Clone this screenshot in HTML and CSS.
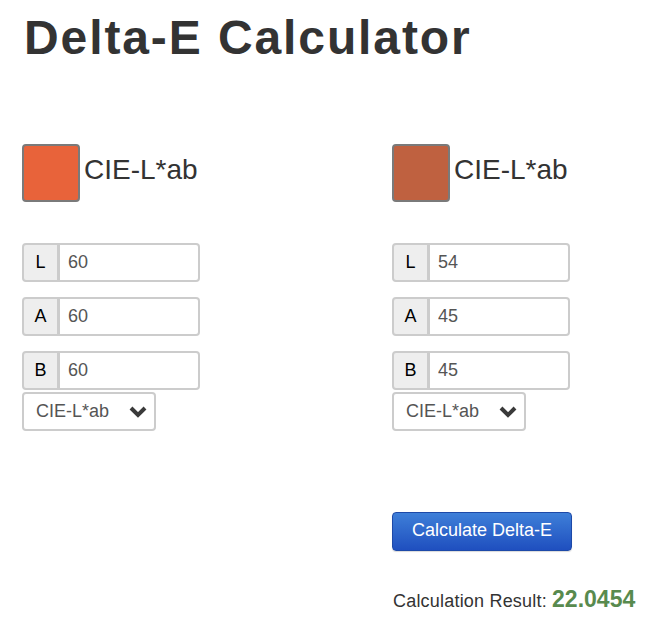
FILE: index.html
```html
<!DOCTYPE html>
<html>
<head>
<meta charset="utf-8">
<link rel="stylesheet" href="styles.css">
</head>
<body>
<h1 class="title">Delta-E Calculator</h1>
<div class="columns">
  <div class="col">
    <div class="color-head">
      <div class="swatch swatch-a"></div>
      <span class="space-label">CIE-L*ab</span>
    </div>
    <div class="fields">
      <div class="input-group"><span class="addon">L</span><input class="field" type="text" value="60"></div>
      <div class="input-group"><span class="addon">A</span><input class="field" type="text" value="60"></div>
      <div class="input-group"><span class="addon">B</span><input class="field" type="text" value="60"></div>
    </div>
    <div class="select">
      <span class="select-text">CIE-L*ab</span>
      <svg class="chevron" width="20" height="14" viewBox="0 0 20 14"><path d="M3 3 L10 10 L17 3" fill="none" stroke="#3a3a3a" stroke-width="4" stroke-linecap="butt" stroke-linejoin="miter"/></svg>
    </div>
  </div>
  <div class="col">
    <div class="color-head">
      <div class="swatch swatch-b"></div>
      <span class="space-label">CIE-L*ab</span>
    </div>
    <div class="fields">
      <div class="input-group"><span class="addon">L</span><input class="field" type="text" value="54"></div>
      <div class="input-group"><span class="addon">A</span><input class="field" type="text" value="45"></div>
      <div class="input-group"><span class="addon">B</span><input class="field" type="text" value="45"></div>
    </div>
    <div class="select">
      <span class="select-text">CIE-L*ab</span>
      <svg class="chevron" width="20" height="14" viewBox="0 0 20 14"><path d="M3 3 L10 10 L17 3" fill="none" stroke="#3a3a3a" stroke-width="4" stroke-linecap="butt" stroke-linejoin="miter"/></svg>
    </div>
  </div>
  <div class="actions">
    <button class="calc-btn" type="button">Calculate Delta-E</button>
    <p class="result">Calculation Result: <span class="result-value">22.0454</span></p>
  </div>
</div>
</body>
</html>
```

FILE: styles.css
```css
* { box-sizing: border-box; }

body {
  margin: 0;
  padding: 0 0 0 22px;
  font-family: "Liberation Sans", Arial, sans-serif;
  font-size: 18px;
  color: #333;
  background: #fff;
}

.title {
  margin: 14px 0 0 2px;
  font-size: 48px;
  line-height: 48px;
  font-weight: bold;
  letter-spacing: 1.9px;
  color: #333;
}

.columns {
  display: grid;
  grid-template-columns: 370px 1fr;
  margin-top: 82px;
}

.color-head {
  display: flex;
  align-items: center;
  gap: 4px;
}

.swatch {
  width: 58px;
  height: 58px;
  border: 2px solid #7a7a7a;
  border-radius: 4px;
}

.swatch-a { background: #e8633a; }
.swatch-b { background: #bf6140; }

.space-label {
  font-size: 28px;
  line-height: 1;
  margin-top: -7px;
  color: #333;
}

.fields {
  margin-top: 41px;
  display: flex;
  flex-direction: column;
  gap: 15px;
}

.input-group {
  display: flex;
  width: 178px;
  height: 39px;
}

.addon {
  width: 38px;
  display: flex;
  align-items: center;
  justify-content: center;
  background: #eee;
  border: 2px solid #ccc;
  border-right-width: 3px;
  border-radius: 4px 0 0 4px;
  color: #000;
  font-size: 18px;
}

.field {
  flex: 1;
  min-width: 0;
  border: 2px solid #ccc;
  border-left: none;
  border-radius: 0 4px 4px 0;
  padding: 0 0 0 8px;
  font-family: "Liberation Sans", Arial, sans-serif;
  font-size: 18px;
  color: #555;
  outline: none;
}

.select {
  margin-top: 2px;
  width: 134px;
  height: 39px;
  border: 2px solid #ccc;
  border-radius: 4px;
  display: flex;
  align-items: center;
  justify-content: space-between;
  padding: 0 6px 0 12px;
  color: #555;
  font-size: 18px;
}

.chevron { display: block; margin-top: 1px; }

.actions {
  grid-column: 2;
  margin-top: 81px;
}

.calc-btn {
  display: block;
  height: 39px;
  padding: 0 19px 2px;
  border: 1px solid #1d49a8;
  border-radius: 4px;
  background: linear-gradient(#3e7fd8, #1f4fbf);
  color: #fff;
  font-family: "Liberation Sans", Arial, sans-serif;
  font-size: 18px;
  box-shadow: 0 1px 1px rgba(0,0,0,0.15);
}

.result {
  margin: 36px 0 0 1px;
  font-size: 18px;
  line-height: 25px;
  letter-spacing: 0.2px;
  color: #333;
}

.result-value {
  font-size: 23px;
  font-weight: bold;
  letter-spacing: 0;
  color: #588a4e;
}
```
